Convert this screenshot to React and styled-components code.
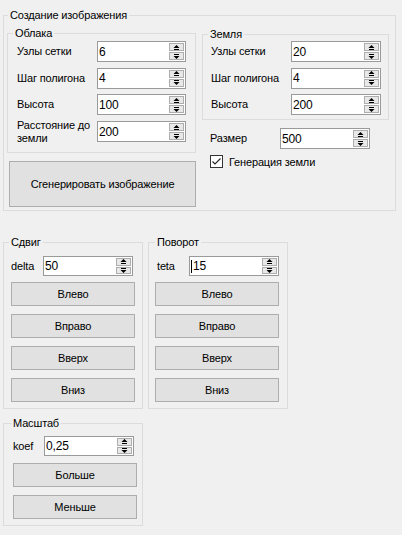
import styled, { createGlobalStyle } from "styled-components"

const Global = createGlobalStyle`
  html, body {
    margin: 0;
    background: #f0f0f0;
  }
  body {
    font-family: "Liberation Sans", Arial, sans-serif;
    font-size: 11px;
    letter-spacing: -0.15px;
    color: #000;
  }
`;

const Page = styled.div`
  width: 402px;
  height: 535px;
  box-sizing: border-box;
  padding: 15px 0 0 3px;
  display: flex;
  flex-direction: column;
  align-items: flex-start;
  overflow: hidden;
`;

const Group = styled.div`
  width: ${p => p.$w}px;
  box-sizing: border-box;
  border: 1px solid #dcdcdc;
  padding: ${p => p.$pad};
  margin-top: ${p => p.$mt || 0}px;
  display: flex;
  flex-direction: column;
`;

/* ml is measured from the group's content edge, so it is often negative */
const Title = styled.div`
  align-self: flex-start;
  height: 14px;
  line-height: 14px;
  margin: -8px 0 0 ${p => p.$ml}px;
  padding: 0 2px;
  background: #f0f0f0;
  white-space: nowrap;
`;

const TopRow = styled.div`
  display: flex;
  margin-top: 11px;
`;

const Column = styled.div`
  display: flex;
  flex-direction: column;
  margin: ${p => p.$m || 0};
`;

const Rows = styled.div`
  display: flex;
  flex-direction: column;
  gap: ${p => p.$gap}px;
  margin-top: ${p => p.$mt || 0}px;
`;

const Row = styled.div`
  display: flex;
  align-items: center;
  height: ${p => p.$h}px;
  padding-left: ${p => p.$indent || 0}px;
  margin-top: ${p => p.$mt || 0}px;
`;

const Label = styled.span`
  width: ${p => p.$w}px;
  flex-shrink: 0;
  line-height: 13px;
  white-space: ${p => (p.$wrap ? "normal" : "nowrap")};
`;

const Spin = styled.div`
  width: ${p => p.$w}px;
  height: 100%;
  box-sizing: border-box;
  border: 1px solid #9a9a9a;
  background: #fff;
  display: flex;
`;

const Value = styled.div`
  flex: 1;
  display: flex;
  align-items: center;
  padding-left: 1px;
  font-size: 12px;
  line-height: 14px;
`;

const Caret = styled.span`
  width: 1px;
  height: 13px;
  background: #000;
  margin-right: 1px;
`;

const Arrows = styled.div`
  width: 15px;
  margin: 1px;
  display: flex;
  flex-direction: column;
  gap: 1px;
`;

const ArrowBtn = styled.div`
  flex: 1;
  box-sizing: border-box;
  border: 1px solid #adadad;
  background: #e8e8e8;
  display: flex;
  align-items: center;
  justify-content: center;
`;

const Button = styled.div`
  width: ${p => p.$w}px;
  height: ${p => p.$h}px;
  box-sizing: border-box;
  border: 1px solid #adadad;
  background: #e1e1e1;
  display: flex;
  align-items: center;
  justify-content: center;
  margin: ${p => p.$m || 0};
`;

const Buttons = styled.div`
  display: flex;
  flex-direction: column;
  gap: 8px;
  margin-top: ${p => p.$mt}px;
`;

const CheckRow = styled.div`
  display: flex;
  align-items: center;
  gap: 6px;
  padding-left: 8px;
  margin-top: 6px;
  height: 13px;
`;

const Box = styled.div`
  width: 13px;
  height: 13px;
  box-sizing: border-box;
  border: 1px solid #333;
  background: #fff;
  display: flex;
  align-items: center;
  justify-content: center;
`;

const BottomRow = styled.div`
  display: flex;
  gap: 5px;
  margin-top: 31px;
`;

function UpDown({ w, value, caret }) {
  return (
    <Spin $w={w}>
      <Value>
        {caret && <Caret />}
        {value}
      </Value>
      <Arrows>
        <ArrowBtn>
          <svg width="7" height="5" viewBox="0 0 7 5">
            <polygon points="0.5,3 6.5,3 3.5,0" fill="#000" />
            <rect x="1" y="4" width="5" height="1" fill="#000" />
          </svg>
        </ArrowBtn>
        <ArrowBtn>
          <svg width="7" height="5" viewBox="0 0 7 5">
            <rect x="1" y="0" width="5" height="1" fill="#000" />
            <polygon points="0.5,2 6.5,2 3.5,5" fill="#000" />
          </svg>
        </ArrowBtn>
      </Arrows>
    </Spin>
  )
}

function Field({ label, value, labelW, inputW, h, wrap, caret, indent }) {
  return (
    <Row $h={h} $indent={indent}>
      <Label $w={labelW} $wrap={wrap}>{label}</Label>
      <UpDown w={inputW} value={value} caret={caret} />
    </Row>
  )
}

function MoveGroup({ title, param, value, caret, pad, indent, titleMl }) {
  return (
    <Group $w={140} $pad={pad}>
      <Title $ml={titleMl}>{title}</Title>
      <Row $h={20} $mt={7} $indent={indent}>
        <Label $w={32}>{param}</Label>
        <UpDown w={90} value={value} caret={caret} />
      </Row>
      <Buttons $mt={6}>
        <Button $w={124} $h={24}>Влево</Button>
        <Button $w={124} $h={24}>Вправо</Button>
        <Button $w={124} $h={24}>Вверх</Button>
        <Button $w={124} $h={24}>Вниз</Button>
      </Buttons>
    </Group>
  )
}

function App() {
  return (
    <Page>
      <Global />
      <Group $w={393} $pad="0 6px 3px 3px">
        <Title $ml={1}>Создание изображения</Title>
        <TopRow>
          <Column>
            <Group $w={189} $pad="0 0 10px 9px">
              <Title $ml={-4}>Облака</Title>
              <Rows $gap={5.7} $mt={1}>
                <Field label="Узлы сетки" value="6" labelW={80} inputW={89} h={21} />
                <Field label="Шаг полигона" value="4" labelW={80} inputW={89} h={21} />
                <Field label="Высота" value="100" labelW={80} inputW={89} h={21} />
                <Field label="Расстояние до земли" value="200" labelW={80} inputW={89} h={21} wrap />
              </Rows>
            </Group>
            <Button $w={187} $h={46} $m="8px 0 0 2px">Сгенерировать изображение</Button>
          </Column>
          <Column $m="1px 0 0 6px">
            <Group $w={187} $pad="0 0 4px 8px">
              <Title $ml={-3}>Земля</Title>
              <Rows $gap={5.7}>
                <Field label="Узлы сетки" value="20" labelW={80} inputW={90} h={21} />
                <Field label="Шаг полигона" value="4" labelW={80} inputW={90} h={21} />
                <Field label="Высота" value="200" labelW={80} inputW={90} h={21} />
              </Rows>
            </Group>
            <Row $h={21} $mt={8} $indent={8}>
              <Label $w={70}>Размер</Label>
              <UpDown w={90} value="500" />
            </Row>
            <CheckRow>
              <Box>
                <svg width="9" height="7" viewBox="0 0 9 7">
                  <polyline points="0.5,3.5 3,6 8.5,0.5" fill="none" stroke="#222" strokeWidth="1.1" />
                </svg>
              </Box>
              <span>Генерация земли</span>
            </CheckRow>
          </Column>
        </TopRow>
      </Group>

      <BottomRow>
        <MoveGroup title="Сдвиг" param="delta" value="50" pad="0 7px 6px 7px" indent={0} titleMl={-2} />
        <MoveGroup title="Поворот" param="teta" value="15" caret pad="0 8px 6px 6px" indent={2} titleMl={0} />
      </BottomRow>

      <Group $w={140} $pad="0 5px 6px 9px" $mt={14}>
        <Title $ml={-2}>Масштаб</Title>
        <Row $h={20} $mt={6}>
          <Label $w={31}>koef</Label>
          <UpDown w={90} value="0,25" />
        </Row>
        <Buttons $mt={7}>
          <Button $w={124} $h={24}>Больше</Button>
          <Button $w={124} $h={24}>Меньше</Button>
        </Buttons>
      </Group>
    </Page>
  )
}

export default App
